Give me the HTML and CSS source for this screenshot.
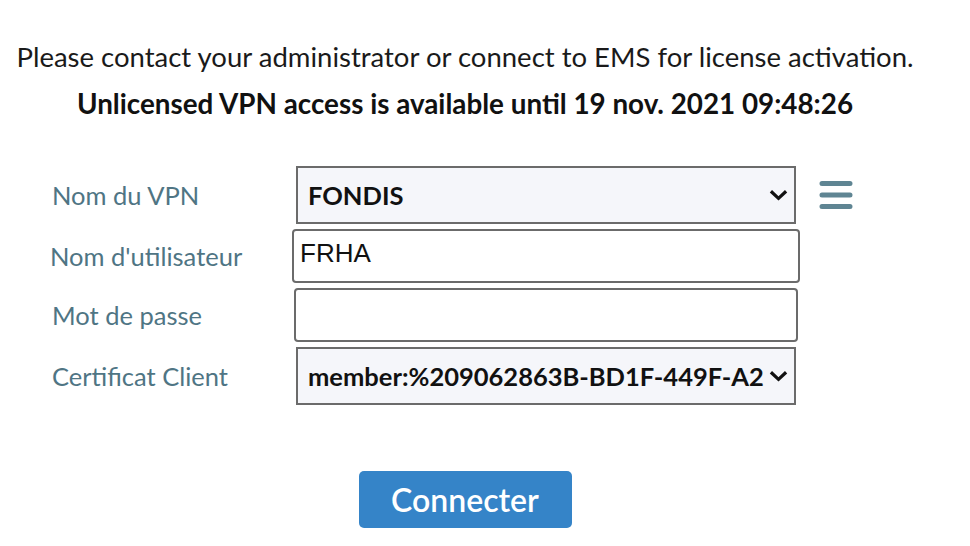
FILE: index.html
```html
<!DOCTYPE html>
<html lang="fr">
<head>
  <meta charset="UTF-8">
  <meta name="viewport" content="width=device-width, initial-scale=1.0">
  <title>VPN</title>
  <link rel="stylesheet" href="styles.css">
</head>
<body>
  <main class="page">
    <div class="notice">
      <p class="notice-text">Please contact your administrator or connect to EMS for license activation.</p>
      <p class="notice-strong">Unlicensed VPN access is available until 19 nov. 2021 09:48:26</p>
    </div>

    <form class="vpn-form">
      <label class="field-label" for="vpn-name">Nom du VPN</label>
      <div class="select-wrap">
        <select id="vpn-name" class="field-select">
          <option>FONDIS</option>
        </select>
        <svg class="chevron" viewBox="0 0 20 12"><path d="M2 2 L10 9.5 L18 2" /></svg>
      </div>
      <button type="button" class="menu-btn" aria-label="Menu">
        <svg viewBox="0 0 34 30"><path d="M3 3.5 H31 M3 15 H31 M3 26.5 H31" /></svg>
      </button>

      <label class="field-label label-user" for="user">Nom d'utilisateur</label>
      <input id="user" class="field-input" type="text" value="FRHA">
      <span></span>

      <label class="field-label" for="pass">Mot de passe</label>
      <input id="pass" class="field-input" type="password">
      <span></span>

      <label class="field-label" for="cert">Certificat Client</label>
      <div class="select-wrap">
        <select id="cert" class="field-select">
          <option>member:%209062863B-BD1F-449F-A2</option>
        </select>
        <svg class="chevron" viewBox="0 0 20 12"><path d="M2 2 L10 9.5 L18 2" /></svg>
      </div>
      <span></span>
    </form>

    <div class="actions">
      <button type="button" class="connect-btn">Connecter</button>
    </div>
  </main>
</body>
</html>
```

FILE: styles.css
```css
/* Global */
body {
  margin: 0;
  font-family: Lato, "Open Sans", sans-serif;
  background-color: #ffffff;
  color: #111;
}

.page {
  width: 930px;
  padding-top: 38px;
}

/* License notice */
.notice {
  text-align: center;
}

.notice-text {
  margin: 0;
  font-size: 27.5px;
  line-height: 38px;
  color: #1a1a1a;
}

.notice-strong {
  margin: 9px 0 0;
  font-size: 27.8px;
  line-height: 38px;
  font-weight: bold;
  color: #111;
}

/* Form grid */
.vpn-form {
  display: grid;
  grid-template-columns: 242px 508px 60px;
  row-gap: 5px;
  align-items: center;
  margin-top: 43px;
  padding-left: 50px;
}

.field-label {
  font-size: 25.5px;
  color: #4f7584;
  padding-left: 2px;
}

.label-user {
  padding-left: 0;
}

.select-wrap {
  position: relative;
  width: 500px;
  margin-left: 4px;
}

.field-select {
  -webkit-appearance: none;
  appearance: none;
  display: block;
  width: 100%;
  height: 58px;
  margin: 0;
  padding: 0 30px 0 10px;
  border: 2px solid #6b6b6b;
  border-radius: 0;
  background-color: #f5f6fa;
  font-family: Lato, sans-serif;
  font-size: 25.5px;
  font-weight: bold;
  color: #111;
}

.chevron {
  position: absolute;
  right: 8px;
  top: 23px;
  width: 19px;
  height: 12px;
  pointer-events: none;
}

.chevron path {
  fill: none;
  stroke: #111;
  stroke-width: 3.4;
}

.field-input {
  box-sizing: border-box;
  width: 508px;
  height: 54px;
  margin: 0;
  padding: 0 6px 5px;
  border: 2px solid #6b6b6b;
  border-radius: 4px;
  background-color: #ffffff;
  font-family: "Liberation Sans", Arial, sans-serif;
  font-size: 26px;
  color: #111;
}

#pass {
  width: 504px;
  margin-left: 2px;
}

.menu-btn {
  width: 36px;
  height: 32px;
  margin-left: 19px;
  padding: 0;
  border: none;
  background: transparent;
  cursor: pointer;
}

.menu-btn svg {
  display: block;
  width: 34px;
  height: 30px;
}

.menu-btn path {
  stroke: #5f8593;
  stroke-width: 5;
  stroke-linecap: round;
}

/* Connect button */
.actions {
  display: flex;
  justify-content: center;
  margin-top: 66px;
}

.connect-btn {
  width: 213px;
  height: 57px;
  border: none;
  border-radius: 5px;
  background-color: #3584c8;
  color: #ffffff;
  font-family: Lato, sans-serif;
  font-size: 32px;
  font-weight: 600;
  cursor: pointer;
}
```
